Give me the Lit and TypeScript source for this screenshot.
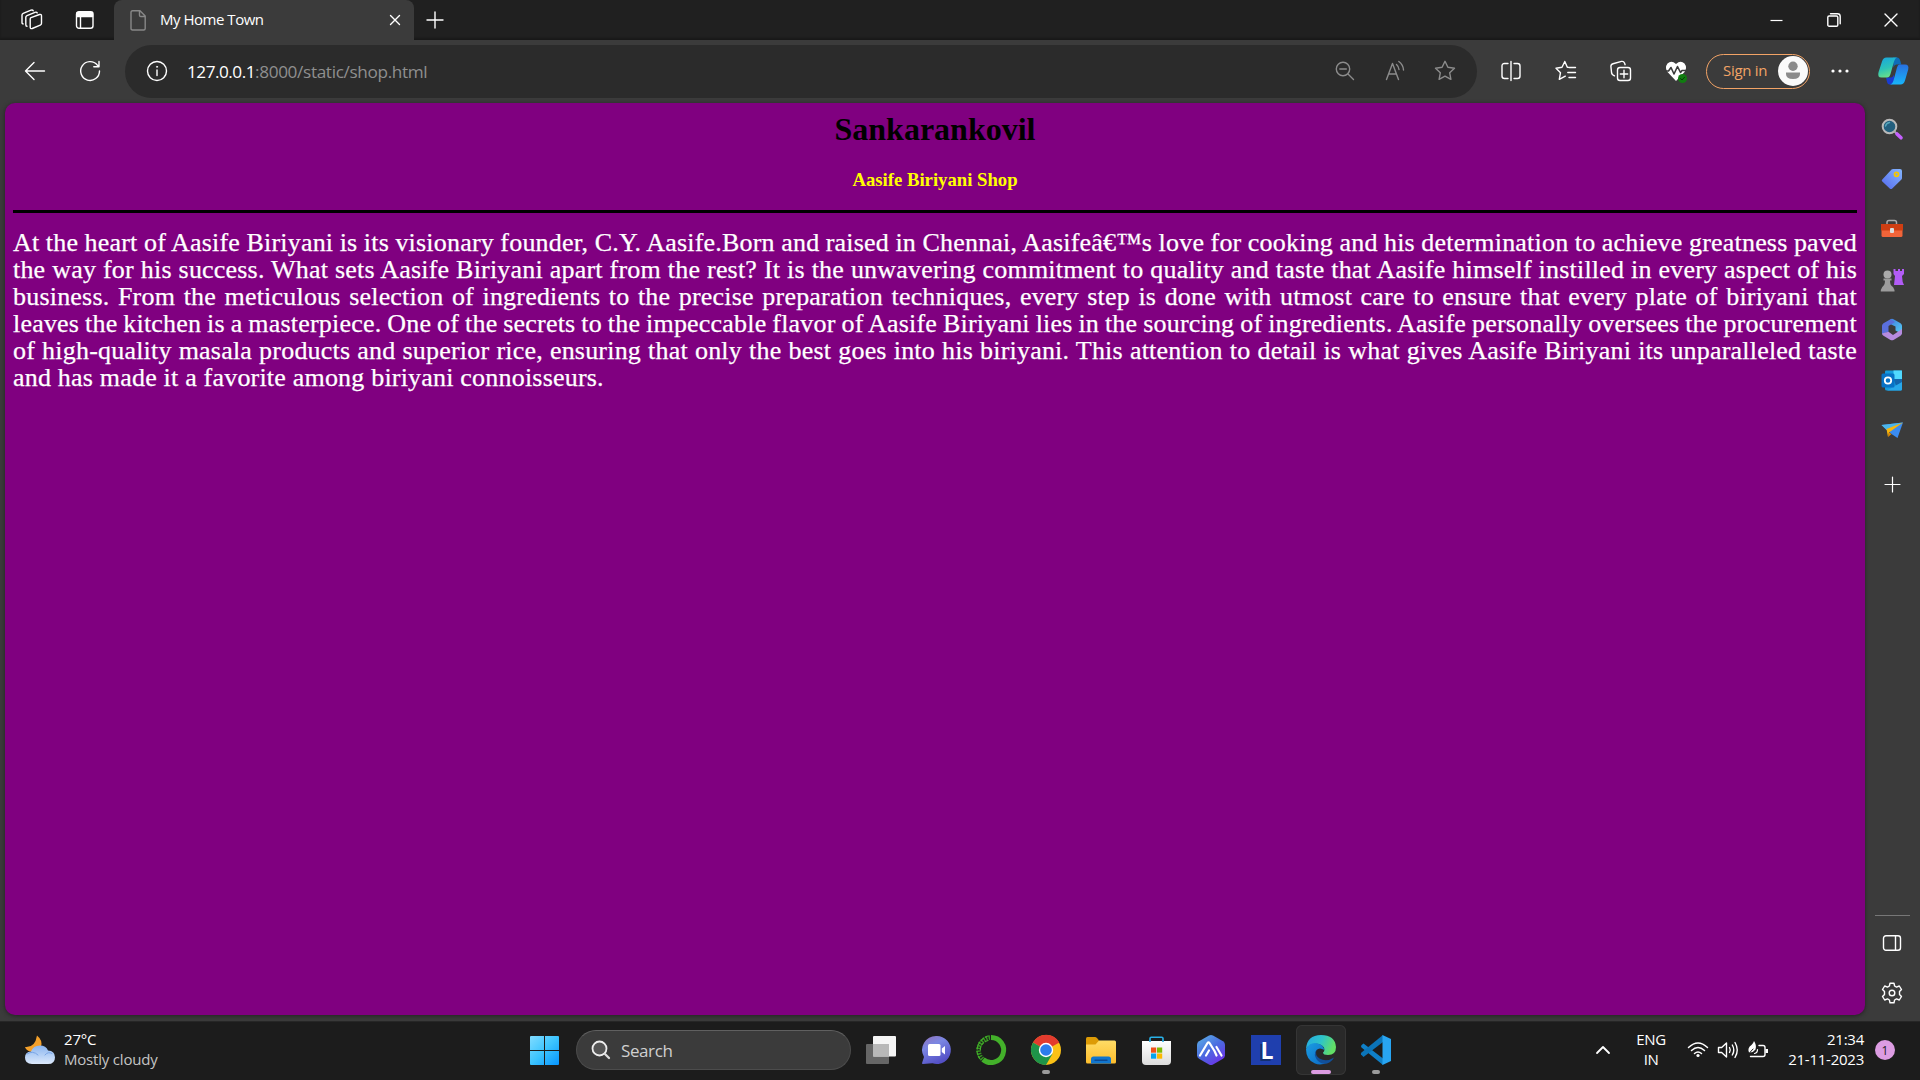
import { LitElement, html, css, svg } from "lit";
import { customElement } from "lit/decorators.js";

const icon = (w: number, h: number, body: unknown) =>
  html`<svg width=${w} height=${h} viewBox="0 0 ${w} ${h}" fill="none" stroke="currentColor" stroke-width="1.4" stroke-linecap="round" stroke-linejoin="round">${body}</svg>`;

const STORY = [
  "At the heart of Aasife Biriyani is its visionary founder, C.Y. Aasife.Born and raised in Chennai, Aasifeâ€™s love for cooking and his determination to achieve greatness paved",
  "the way for his success. What sets Aasife Biriyani apart from the rest? It is the unwavering commitment to quality and taste that Aasife himself instilled in every aspect of his",
  "business. From the meticulous selection of ingredients to the precise preparation techniques, every step is done with utmost care to ensure that every plate of biriyani that",
  "leaves the kitchen is a masterpiece. One of the secrets to the impeccable flavor of Aasife Biriyani lies in the sourcing of ingredients. Aasife personally oversees the procurement",
  "of high-quality masala products and superior rice, ensuring that only the best goes into his biriyani. This attention to detail is what gives Aasife Biriyani its unparalleled taste",
  "and has made it a favorite among biriyani connoisseurs.",
];

const workspaces = icon(22, 22, svg`<path d="M10 8.700L18.500 5.500q2-.5 2 1.300v7.500q0 1.300-1.200 1.800l-8.100 3.400q-2 .6-2-1.200V10q0-1 .8-1.300z"/><path d="M6 17.300q-1.200 0-1.200-1.500V8.300q0-1.200 1.200-1.700L14 3.300q1.700-.5 2.200.6"/><path d="M2.200 14.900Q1 14.900 1 13.400V6q0-1.200 1.200-1.700L10 1.200q1.700-.5 2.200.6"/>`);
const tabsMenu = icon(20, 20, svg`<rect x="1.500" y="1.700" width="16.500" height="16.500" rx="2.500"/><path d="M2 2.500h15.500v4H2z" fill="currentColor"/><path d="M5.500 6v12"/>`);
const page = icon(16, 21, svg`<path d="M2.500.8h7.500l5.200 5.200v12.500q0 1.500-1.500 1.500H2.500Q1 20 1 18.500V2.300Q1 .8 2.500.8zM9.500 1v4.200q0 1.300 1.300 1.300H15"/>`);
const cross = icon(12, 12, svg`<path d="M1.500 1.500l9 9m0-9l-9 9"/>`);
const plus = icon(18, 18, svg`<path d="M9 1v16M1 9h16"/>`);
const minimize = icon(13, 13, svg`<path d="M.5 6.500h12" stroke-width="1.200" stroke-linecap="butt"/>`);
const restore = icon(14, 14, svg`<rect x=".8" y="3" width="10" height="10.200" rx="1.300"/><path d="M3.500.8h7q2.700 0 2.700 2.700v7.300"/>`);
const closeWin = icon(14, 14, svg`<path d="M1 1l12 12M13 1L1 13"/>`);
const back = icon(22, 20, svg`<path d="M20.500 10H1.500M10 1.500L1.500 10l8.500 8.500"/>`);
const reload = icon(22, 22, svg`<path d="M20.500 11a9.400 9.400 0 1 1-2.200-6l1.700 1.700M20 1.500v5.300h-5.200"/>`);
const info = icon(22, 22, svg`<circle cx="11" cy="11" r="9.500"/><path d="M11 10v5.500"/><circle cx="11" cy="6.800" r=".6" fill="currentColor" stroke-width=".7"/>`);
const zoomOut = icon(20, 20, svg`<circle cx="8" cy="8" r="6.700"/><path d="M13 13l5.500 5.500M4.800 8h6.500"/>`);
const readAloud = icon(22, 22, svg`<path d="M2.500 19.500L8.500 3.500l6 16M4.800 14h7.500M12.500 4.500q2.300 2 2.500 5M14.800 1.500q4.300 3 4.700 8.500"/>`);
const star = icon(22, 22, svg`<path d="M11 1.300l2.900 6 6.600.9-4.800 4.600 1.200 6.500-5.900-3.100-5.900 3.100 1.200-6.500L1.500 8.200l6.600-.9z"/>`);
const split = icon(20, 20, svg`<path d="M7 2.500H3.500Q1 2.500 1 5v10q0 2.500 2.500 2.500H7M13 2.500h3.500Q19 2.500 19 5v10q0 2.500-2.500 2.500H13M10 .5v19"/>`);
const favorites = icon(22, 22, svg`<path d="M13 7.200h-.7L9.800 1.500 7 7.300l-6 .9 4.500 4.500-1.200 6.700 6-3.200M14 7.500h6.500M12.800 12.500h7.700M14 17.500h6.500"/>`);
const collections = icon(22, 22, svg`<rect x="7.500" y="7.500" width="13" height="13" rx="2.500"/><path d="M14 10.300v7.400M10.300 14h7.400M4.500 15.800l-1.700-1Q1.800 14 1.600 13L.9 6.500Q.8 4.300 3 3.700l8.500-2.300q2.200-.4 3 1.600l.6 1.700"/>`);
const essentials = icon(22, 24, svg`<path d="M11 22L2.500 13Q-.5 8.500 2.500 4.500 6.500 1 11 5q4.500-4 8.500-.5 3 4 0 8.500z" fill="#fff" stroke="none"/><path d="M-.5 12h4L6 8.500l3 6.500 3.500-7.500 3 6 1.500-2h5" stroke="#3b3b3b" stroke-width="1.600"/><circle cx="17.500" cy="19.500" r="4.500" fill="#107c10" stroke="none"/><path d="M15.500 19.500l1.500 1.500 2.600-2.800" stroke="#063c06" stroke-width="1"/>`);
const avatar = icon(30, 30, svg`<g stroke="none"><circle cx="15" cy="15" r="15" fill="#fafafa"/><circle cx="15" cy="10.300" r="4.700" fill="#8b8b8b"/><path d="M8 16.500h14v1.500q0 5-7 5t-7-5z" fill="#8b8b8b"/></g>`);
const dots = icon(18, 4, svg`<g fill="currentColor" stroke="none"><circle cx="2" cy="2" r="1.600"/><circle cx="9" cy="2" r="1.600"/><circle cx="16" cy="2" r="1.600"/></g>`);
const copilot = icon(31, 30, svg`<defs><linearGradient id="a" x2=".3" y2="1"><stop stop-color="#18a5e0"/><stop offset=".6" stop-color="#2cc3b8"/><stop offset="1" stop-color="#65dc8c"/></linearGradient><linearGradient id="b" x2="0" y2="1"><stop stop-color="#2870e0"/><stop offset="1" stop-color="#18b5fa"/></linearGradient></defs><g stroke="none" transform="translate(0 1.500)"><path d="M15 0h4q2.500 0 3.500 4l.8 3h-5q-2 0-2.800 3z" fill="#0e6cb8"/><path d="M8 20h5q2 0 2.500-3l1.500 5q-1 5-4 5h-1.500q-2 0-2.700-3.500z" fill="#193cd2"/><path d="M8.500 0H19q-2 .5-3 4l-3.500 12.500Q11.500 20 9 20H3.500Q-1 20 .6 14.500L4 4Q5.200 0 8.500 0z" fill="url(#a)"/><path d="M21.500 7H27q4.300 0 3.200 5L27 23q-1.200 4-4.500 4H12q2.500-.5 3.500-4L19 10q.8-3 2.500-3z" fill="url(#b)"/></g>`);

const sideSearch = icon(22, 22, svg`<circle cx="8.500" cy="8.500" r="6.800" fill="#235f7e" stroke="#b9b9b9" stroke-width="2"/><path d="M4.500 8q.8-3 4-3.500" stroke="#55a5bb"/><path d="M13.500 13.500l2 2" stroke="#aaa" stroke-width="2"/><path d="M16 16l4 3.800" stroke="#c560ff" stroke-width="3.600"/>`);
const shopping = icon(22, 22, svg`<defs><linearGradient id="t" x1="1" x2="0" y2="1"><stop stop-color="#83b5ff"/><stop offset="1" stop-color="#5569ed"/></linearGradient></defs><path d="M12 1h7q2 0 2 2v7q0 1-.8 1.800L11 20.700q-1 .8-2 0L1.300 13.500q-1.200-1 0-2L10.500 1.600q.7-.6 1.500-.6z" fill="url(#t)" stroke="none"/><circle cx="15.500" cy="6.300" r="2" stroke="#f5c700" stroke-width="1.800"/>`);
const tools = icon(24, 20, svg`<path d="M7 5V3.500Q7 1.500 9 1.500h5.500q2 0 2 2V5" stroke="#aaa" stroke-width="1.500"/><rect x="1.500" y="5" width="21" height="13" rx="1.500" fill="#f16439" stroke="none"/><path d="M1 5h22v6.500H1z" fill="#cf3e12" stroke="none"/><rect x="10" y="9" width="4" height="5" rx="1" fill="#ddd" stroke="none"/>`);
const games = icon(24, 24, svg`<g stroke="none"><path d="M13.500 1h2v2h2.500V1h2v2h2V1H24v5l-2 2 .7 6 1.300 3h-10l1-9-1.500-2z" fill="#b25cf6"/><circle cx="7.500" cy="6.500" r="4" fill="#aaa"/><path d="M3.500 10.500h8v2H10q0 5 3 6.500l1.500 3v1.500H.8V22l1.500-3Q5 17 5 12.500H3.500z" fill="#9c9c9c"/></g>`);
const m365 = icon(22, 23, svg`<defs><linearGradient id="ma" x2="1" y2="1"><stop stop-color="#3f78dc"/><stop offset="1" stop-color="#55d0f5"/></linearGradient></defs><g stroke="none"><path d="M9.500 1.300q1.500-1 3 0l7 4q1.500 1 1.500 2.500V16l-6.500-3.500v-4L7 5z" fill="url(#ma)"/><path d="M9.500 1.300l-7 4Q1 6.300 1 7.800v8.500l6.500-2.500V8L14 4z" fill="#5a6fdd"/><path d="M1 15.500q0 1.500 1.500 2.200l7 4.200q1.500.8 3 0l7-4.200q1.500-1 1.500-2.700V11l-9 6-4.500-3.200z" fill="#b68be0"/></g>`);
const outlook = icon(22, 21, svg`<g stroke="none"><path d="M4 1.500Q4 .5 5 .5h15q1 0 1 1V19q0 1.500-1.500 1.500H6Q4 20.500 4 19z" fill="#169bdc"/><path d="M12.500.5H21V9h-8.500z" fill="#50d9ff"/><path d="M12.500 9H21v4l-6 3z" fill="#1266ae"/><path d="M6 20.500L21 12v7q0 1.500-1.500 1.500z" fill="#28a8ea"/><rect x=".5" y="3.500" width="13" height="14" rx="1.500" fill="#0872c6"/></g><circle cx="7" cy="10.500" r="3.200" stroke="#fff" stroke-width="1.800"/>`);
const drop = icon(23, 17, svg`<g stroke="none"><path d="M.5 3L22 .5 16.500 16l-6-4z" fill="#3b8cf0"/><path d="M.5 3L22 .5 5.500 8z" fill="#4bb5ea"/><path d="M5.500 7L22 .5 8 10.500 7 15z" fill="#f9b50b"/><path d="M7 15l1-4.500 2.500 1.500z" fill="#e68b00"/></g>`);
const sidePlus = icon(17, 17, svg`<path d="M8.500 1v15M1 8.500h15" stroke-width="1.200"/>`);
const panel = icon(20, 18, svg`<rect x="1.500" y="1.700" width="17" height="14.500" rx="2.500"/><path d="M13.500 2v14"/>`);
const gear = icon(22, 22, svg`<circle cx="11" cy="11" r="2.800"/><path d="M9 1.200h4l.6 2.800 1.900 1.100L18.300 4l2.200 3.500-2 2.100v2.800l2 2.100-2.200 3.500-2.800-1.100-1.900 1.100-.6 2.800H9L8.400 18l-1.900-1.100L3.700 18l-2.200-3.500 2-2.100V9.600l-2-2.100L3.700 4l2.800 1.100L8.400 4z"/>`);

const weather = icon(30, 30, svg`<defs><linearGradient id="cl" x2="0" y2="1"><stop stop-color="#8ab5ef"/><stop offset="1" stop-color="#dce9fb"/></linearGradient></defs><g stroke="none"><path d="M12 .5q6 5 4 11l-5 5H5Q1 15 0 12q10 1 12-11.500z" fill="#f3a02b"/><path d="M7 29Q0 29 0 22.500 0 17 6 16.500 8 10.500 15 10.500q6 0 8 5 7 .5 7 6.700Q30 29 23 29z" fill="url(#cl)"/><path d="M2 19q6-4 11 1M20 20q3-4 7-1.500" fill="none" stroke="#79a5e6" stroke-width="1"/></g>`);
const start = icon(29, 29, svg`<defs><linearGradient id="w" x2="1" y2="1"><stop stop-color="#81dcff"/><stop offset=".5" stop-color="#3cc4ff"/><stop offset="1" stop-color="#0695ff"/></linearGradient></defs><path d="M1 0h13v14H0V1q0-1 1-1zM15 0h13q1 0 1 1v13H15zM0 15h14v14H1q-1 0-1-1zM15 15h14v13q0 1-1 1H15z" fill="url(#w)" stroke="none"/>`);
const magnify = icon(20, 20, svg`<circle cx="8.500" cy="8.500" r="7" fill="#555" stroke="#eee" stroke-width="1.800"/><path d="M14 14l4 4" stroke="#ddd" stroke-width="2.300"/>`);
const taskView = icon(30, 28, svg`<g stroke="none"><rect y="8" width="23" height="20" rx="1" fill="#666"/><rect x="7" width="23" height="20.500" rx="1" fill="#f5f5f5"/><path d="M7 8h16v12.500H7z" fill="#b8b8b8"/></g>`);
const chat = icon(29, 28, svg`<defs><linearGradient id="ch" x2=".5" y2="1"><stop stop-color="#9270b8"/><stop offset=".4" stop-color="#7b87e3"/><stop offset="1" stop-color="#5450c6"/></linearGradient></defs><path d="M14.500 0a14 14 0 1 1-4 27.300L1 28q-1.500 0-.8-1.500L2 21A14 14 0 0 1 14.500 0z" fill="url(#ch)" stroke="none"/><rect x="6" y="8" width="12.500" height="12" rx="1.500" fill="#fff" stroke="none"/><path d="M19.800 12.500L23 10v8.500L19.800 16z" fill="#fff" stroke="none"/>`);
const anaconda = icon(30, 30, svg`<path d="M15 2.500a12.500 12.500 0 1 1-8 22" stroke="#43b02a" stroke-width="5" stroke-linecap="butt"/><path d="M14 2.500A12.500 12.500 0 0 0 7 24.500" stroke="#369522" stroke-width="4.500" stroke-dasharray="1.500 1.200" stroke-linecap="butt"/><path d="M12 1Q2 5 1 15q0 6 4 10M12 5.500Q4 8 4.300 16" stroke="#43b02a" stroke-width="1.200" stroke-dasharray="3 2"/>`);
const chrome = icon(30, 30, svg`<g stroke="none"><circle cx="15" cy="15" r="15" fill="#fbc116"/><path d="M15 15L2 7.500a15 15 0 0 1 26.300 0z" fill="#e33b2e"/><path d="M15 15L2 7.500A15 15 0 0 0 15 30l6.500-11.300z" fill="#1e9449"/><circle cx="15" cy="15" r="7.200" fill="#fff"/><circle cx="15" cy="15" r="5.800" fill="#2d7cec"/></g>`);
const folder = icon(30, 28, svg`<defs><linearGradient id="fo" x2="0" y2="1"><stop stop-color="#ffdc66"/><stop offset="1" stop-color="#fdbd2c"/></linearGradient></defs><g stroke="none"><path d="M0 2.500Q0 1 1.500 1H9q1 0 2 1l2 2.500V12H0z" fill="#dd9b06"/><path d="M0 8.500h9.500L13 4.500h15.500q1.500 0 1.500 1.500v20q0 1.500-1.500 1.500h-27Q0 27.500 0 26z" fill="url(#fo)"/><path d="M5 27.500V23q0-2.500 2.500-2.500h15Q25 20.500 25 23v4.500z" fill="#1176ce"/></g><path d="M9 24.300h12" stroke="#0c4a94"/>`);
const store = icon(29, 29, svg`<defs><linearGradient id="st" x2="0" y2="1"><stop stop-color="#fff"/><stop offset="1" stop-color="#dcdcdc"/></linearGradient></defs><path d="M0 5h29v20q0 4-4 4H4q-4 0-4-4z" fill="url(#st)" stroke="none"/><path d="M8 6V2.500Q8 1.200 9.300 1.200h10.400Q21 1.200 21 2.500V6" stroke="#28b1e8" stroke-width="1.600" stroke-linecap="butt"/><g stroke="none"><path d="M9 11.500h5.200v5.200H9z" fill="#f1511b"/><path d="M15 11.500h5.200v5.200H15z" fill="#80bb03"/><path d="M9 17.500h5.200v5.200H9z" fill="#05a4ef"/><path d="M15 17.500h5.200v5.200H15z" fill="#fbb901"/></g>`);
const hexApp = icon(28, 30, svg`<defs><linearGradient id="hx" x2=".7" y2="1"><stop stop-color="#5db5e7"/><stop offset=".55" stop-color="#4a6be0"/><stop offset="1" stop-color="#6b34e8"/></linearGradient></defs><path d="M12 .6q2-1 4 0l10 5.600q2 1.300 2 3.500v10.600q0 2.200-2 3.500l-10 5.600q-2 1-4 0L2 23.800q-2-1.300-2-3.500V9.700Q0 7.500 2 6.200z" fill="url(#hx)" stroke="none"/><path d="M3 20.500L10.500 8q1-1.500 2 0L17.500 16l2 4.500M9 20.500l3-5M19.500 12l5 8.500" stroke="#fff" stroke-width="2.200"/>`);
const edge = icon(30, 30, svg`<defs><linearGradient id="e1" x2="1" y2=".3"><stop stop-color="#24a9e4"/><stop offset=".55" stop-color="#2fc4c8"/><stop offset="1" stop-color="#62df66"/></linearGradient><linearGradient id="e2" x2="1" y2="1"><stop stop-color="#1b9de2"/><stop offset="1" stop-color="#0b68c5"/></linearGradient></defs><g stroke="none"><path d="M0 14Q1 0 15 0q14 0 15 12 0 8-8 8-5 0-5-2.500 2-1 1-5Q14 8 9 9 3 9 0 14z" fill="url(#e1)"/><path d="M0 14q3-6 9-6 8 .5 9.500 7-5-3-8 0-2.500 4 1 9.500 4 4 9.500 3Q15 31 9 28.500 0 25 0 14z" fill="url(#e2)"/><path d="M10.500 15q-2 5 3 8.500 7 4 14.500-1-2 4-7 6-6 1-10-3.500-4-6-.5-10z" fill="#11509b"/></g>`);
const vscode = icon(30, 30, svg`<g stroke="none"><path d="M0 10.500l2.500-2L22 23.500V30L.5 12.500q-1-1 0-2z" fill="#0f80c8"/><path d="M0 19.500l2.500 2.500L22 7V0L.5 17.500q-1 1-.5 2z" fill="#0b74b8"/><path d="M21.500 0L30 4v22l-8.500 4z" fill="#28a5f2"/></g>`);
const chevronUp = icon(16, 10, svg`<path d="M2 8l6-6 6 6" stroke-width="1.800"/>`);
const wifi = icon(22, 17, svg`<path d="M1.500 6.500q9.500-9 19 0M4.500 9.500q6.500-6 13 0M7.500 12.500q3.500-3 7 0" stroke-width="1.500"/><circle cx="11" cy="14.500" r="1.600" fill="#fff" stroke="none"/>`);
const volume = icon(22, 18, svg`<path d="M1.500 6.500h3.200L9.500 2v14l-4.800-4.500H1.500zM12.500 6.500q1.500 2.500 0 5M15.300 4q3 5 0 10M18 1.500q4.500 7.500 0 15"/>`);
const battery = icon(22, 18, svg`<path d="M12 4.500h4q2 0 2 2v7q0 2-2 2H3.500"/><path d="M18.500 8H21v4h-2.500z" fill="#fff" stroke="none"/><path d="M7 0q3 4.500 1.500 8.500-2.500 3.500-6.500 3-2-4.500 2.500-7.500Q6.500 2 7 0z" fill="#fff" stroke="none"/><path d="M1.500 14.500q1-3.500 4.500-6.500" stroke="#1c1c1c" stroke-width="1"/><path d="M7.500 12.500q3-.5 3-4" stroke-width="1.200"/>`);

@customElement("app-root")
export class AppRoot extends LitElement {
  static styles = css`
    :host { display: block; width: 1920px; height: 1080px; overflow: hidden; color: #fff; background: #3b3b3b; font-family: "Open Sans", "Noto Sans", sans-serif; }
    * { box-sizing: border-box; }
    svg { display: block; flex: none; overflow: visible; }
    .window { display: grid; grid-template-rows: 40px 63px 918px 59px; height: 1080px; }
    .strip { display: flex; align-items: center; background: #202020; box-shadow: inset 0 -2px 2px #191919; padding-right: 1px; }
    .cell { display: flex; align-items: center; justify-content: center; flex: none; width: 50px; }
    .w64 { width: 64px; } .w57 { width: 57px; } .w55 { width: 55px; }
    .tabs-menu { margin-left: -4px; }
    .tab { display: flex; align-items: center; width: 300px; height: 40px; margin-left: 4px; padding: 0 13px 0 16px; background: #3b3b3b; border-radius: 8px 8px 0 0; font-size: 15px; }
    .tab .title { flex: 1; margin-left: 14px; padding-bottom: 2px; letter-spacing: -0.48px; white-space: nowrap; }
    .page-icon { color: #888; }
    .grow { flex: 1; }
    .new-tab { width: 42px; }
    .toolbar { display: flex; align-items: center; background: #3b3b3b; padding-bottom: 1px; }
    .back { width: 70px; } .reload { width: 40px; }
    .address { display: flex; align-items: center; width: 1352px; height: 53px; margin: 1px 6px 0 15px; padding: 0 7px 1px; background: #2b2b2b; border-radius: 27px; }
    .url { flex: 1; font-size: 17.200px; color: #8f8f8f; letter-spacing: -0.35px; white-space: nowrap; margin-left: 5px; }
    .url b { font-weight: 400; color: #fff; letter-spacing: -0.5px; }
    .dim { color: #8c8c8c; }
    .signin { display: flex; align-items: center; justify-content: space-between; width: 104px; height: 35px; margin-left: 3px; padding: 0 1px 0 16px; border: 1.500px solid #f2a366; border-radius: 18px; color: #f2a366; font-size: 15px; letter-spacing: -0.3px; white-space: nowrap; }
    .signin span { padding-bottom: 2px; }
    .more { width: 60px; } .copilot { width: 46px; }
    .body { display: flex; }
    .view { width: 1860px; height: 912px; margin-left: 5px; padding: 8px; background: #800080; border-radius: 10px; font-family: "Liberation Serif", serif; box-shadow: 0 1px 4px #222; }
    h1 { margin: 0 0 21px; font-size: 32px; line-height: 37px; text-align: center; color: #000; }
    h3 { margin: 0 0 20px; font-size: 18.720px; line-height: 21px; text-align: center; color: #ff0; }
    .rule { height: 3px; margin: 0 0 16px; background: #000; }
    .story { margin: 0; font-size: 26px; line-height: 27px; -webkit-text-stroke: 0.25px #fff; }
    .line { display: block; text-align: justify; text-align-last: justify; white-space: nowrap; letter-spacing: 0.2px; word-spacing: -1px; }
    .line:last-child { text-align-last: left; word-spacing: 0; }
    .side { display: flex; flex-direction: column; align-items: center; width: 54px; padding: 1px 0 3px; }
    .side .item { display: flex; align-items: center; justify-content: center; height: 50.200px; flex: none; }
    .side .add { height: 58px; }
    .divider { width: 35px; height: 1px; background: #777; margin-bottom: 2px; }
    .taskbar { display: flex; align-items: center; background: #1c1c1c; border-top: 1px solid #262626; padding-bottom: 2px; font-size: 15px; }
    .weather { display: flex; align-items: center; width: 530px; padding-left: 25px; gap: 9px; line-height: 20px; letter-spacing: -0.2px; }
    .weather .sky { color: #c4c4c4; }
    .labels { padding-bottom: 2px; }
    .search { display: flex; align-items: center; gap: 10px; width: 275px; height: 40px; margin: 0 5px 0 17px; padding-left: 14px; border: 1px solid #4c4c4c; border-top-color: #606060; border-radius: 20px; background: #3b3b3b; color: #d0d0d0; font-size: 17px; letter-spacing: -0.4px; }
    .app { display: flex; flex: none; align-items: center; justify-content: center; width: 50px; height: 50px; margin-right: 5px; border-radius: 6px; position: relative; }
    .active { background: #292929; box-shadow: inset 0 0 0 1px #353535; }
    .mark { position: absolute; bottom: 1px; width: 8px; height: 4px; border-radius: 2px; background: #9a9a9a; }
    .active .mark { width: 20px; background: #dc9ce2; }
    .tile { display: flex; width: 30px; height: 30px; align-items: center; justify-content: center; background: #1f3fae; font: bold 23px/30px "Open Sans", sans-serif; padding-left: 2px; text-shadow: -2px 2px #143070; }
    .lang { width: 60px; text-align: center; line-height: 20px; letter-spacing: -0.4px; margin-left: 10px; padding-bottom: 2px; }
    .tray { display: flex; gap: 8px; margin-left: 6px; }
    .clock { width: 95px; margin-right: 2px; text-align: right; line-height: 20px; letter-spacing: -0.25px; padding-bottom: 2px; white-space: nowrap; }
    .badge { display: flex; align-items: center; justify-content: center; width: 20px; height: 20px; margin: 0 25px 0 9px; border-radius: 50%; background: #dc9ce2; color: #222; font-size: 12px; }
  `;

  private app(body: unknown, marked = false, active = false) {
    return html`<div class="app ${active ? "active" : ""}">${body}${marked ? html`<span class="mark"></span>` : null}</div>`;
  }

  render() {
    return html`
      <div class="window">
        <header class="strip">
          <div class="cell w64">${workspaces}</div>
          <div class="cell tabs-menu">${tabsMenu}</div>
          <div class="tab"><span class="page-icon">${page}</span><span class="title">My Home Town</span>${cross}</div>
          <div class="cell new-tab">${plus}</div>
          <div class="grow"></div>
          <div class="cell w57">${minimize}</div><div class="cell w57">${restore}</div><div class="cell w57">${closeWin}</div>
        </header>
        <nav class="toolbar">
          <div class="cell back">${back}</div><div class="cell reload">${reload}</div>
          <div class="address">
            <div class="cell">${info}</div>
            <span class="url"><b>127.0.0.1</b>:8000/static/shop.html</span>
            <div class="cell dim">${zoomOut}</div><div class="cell dim">${readAloud}</div><div class="cell dim">${star}</div>
          </div>
          <div class="cell w55">${split}</div><div class="cell w55">${favorites}</div><div class="cell w55">${collections}</div><div class="cell w55">${essentials}</div>
          <div class="signin"><span>Sign in</span>${avatar}</div>
          <div class="cell more">${dots}</div><div class="cell copilot">${copilot}</div>
        </nav>
        <div class="body">
          <main class="view">
            <h1>Sankarankovil</h1>
            <h3>Aasife Biriyani Shop</h3>
            <div class="rule"></div>
            <p class="story">${STORY.map((line) => html`<span class="line">${line}</span>`)}</p>
          </main>
          <aside class="side">
            ${[sideSearch, shopping, tools, games, m365, outlook, drop].map((i) => html`<div class="item">${i}</div>`)}
            <div class="item add">${sidePlus}</div>
            <div class="grow"></div>
            <div class="divider"></div>
            <div class="item">${panel}</div><div class="item">${gear}</div>
          </aside>
        </div>
        <footer class="taskbar">
          <div class="weather">${weather}<div class="labels"><div>27°C</div><div class="sky">Mostly cloudy</div></div></div>
          ${start}
          <div class="search">${magnify}<span>Search</span></div>
          ${this.app(taskView)}${this.app(chat)}${this.app(anaconda)}${this.app(chrome, true)}${this.app(folder)}${this.app(store)}${this.app(hexApp)}
          ${this.app(html`<span class="tile">L</span>`)}${this.app(edge, true, true)}${this.app(vscode, true)}
          <div class="grow"></div>
          ${chevronUp}
          <div class="lang">ENG<br />IN</div>
          <div class="tray">${wifi}${volume}${battery}</div>
          <div class="clock">21:34<br />21-11-2023</div>
          <div class="badge">1</div>
        </footer>
      </div>
    `;
  }
}
